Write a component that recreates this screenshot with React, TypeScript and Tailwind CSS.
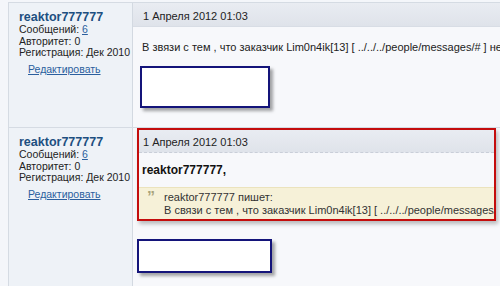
import React from 'react';

const font = { fontFamily: '"Liberation Sans", Arial, sans-serif' };

const UserInfo = () => (
  <div className="w-[124px] shrink-0 bg-[#eef2f7] border-r border-[#d3d9e1] pl-[10px] pt-[7px] whitespace-nowrap">
    <div className="text-[12.5px] font-bold leading-[14px] text-[#1d4f80]">reaktor777777</div>
    <div className="text-[10.5px] leading-[11.5px] text-[#222]">
      Сообщений: <span className="text-[#2b5f9e] underline">6</span>
    </div>
    <div className="text-[10.5px] leading-[11.5px] text-[#222]">Авторитет: 0</div>
    <div className="text-[10.5px] leading-[11.5px] text-[#222]">Регистрация: Дек 2010</div>
    <div className="mt-[4px] pl-[9px] text-[10.5px] leading-[12px] text-[#2b5f9e] underline">Редактировать</div>
  </div>
);

export default function App() {
  return (
    <div className="w-[500px] h-[286px] overflow-hidden bg-[#f4f6fa] pl-[8px] pt-[2px]" style={font}>
      {/* post 1 */}
      <div className="flex h-[125px] border-t border-l border-[#d5dbe3]">
        <UserInfo />
        <div className="flex-1 min-w-0 overflow-hidden bg-[#f7f8fb]">
          <div className="h-[24px] bg-gradient-to-b from-[#e9ecf2] to-[#dfe3ea] border-b border-[#d8dde5] pl-[10px] pt-[7px] text-[11px] leading-[12px] text-[#222] whitespace-nowrap">
            1 Апреля 2012 01:03
          </div>
          <div className="pl-[9px] pt-[14px] text-[11px] leading-[12px] text-[#222] whitespace-nowrap">
            В звязи с тем , что заказчик Lim0n4ik[13] [ ../../../people/messages/# ] не
          </div>
          <div className="pl-[7px] pt-[13px]">
            <div className="w-[130px] h-[42px] bg-white border-2 border-[#14147a] shadow-[3px_3px_3px_rgba(0,0,0,0.35)]" />
          </div>
        </div>
      </div>
      {/* post 2 */}
      <div className="flex h-[160px] border-t border-l border-[#d5dbe3]">
        <UserInfo />
        <div className="flex-1 min-w-0 overflow-hidden bg-[#f7f8fb] pl-[4px]">
          <div className="w-[359px] border-2 border-[#c40d0d] shadow-[2px_3px_4px_rgba(0,0,0,0.25)]">
            <div className="h-[23px] bg-gradient-to-b from-[#e9ecf2] to-[#dfe3ea] border-b border-dashed border-[#c9ced8] pl-[4px] pt-[6px] text-[11px] leading-[12px] text-[#222] whitespace-nowrap">
              1 Апреля 2012 01:03
            </div>
            <div className="bg-[#f7f8fb] pl-[3px] pt-[11px] pb-[10px] text-[12px] font-bold leading-[13px] text-[#111]">
              reaktor777777,
            </div>
            <div className="flex bg-[#f6f1d8] border-t border-[#ebe3bd] pt-[3px] pb-[2px] text-[11px] leading-[13px] text-[#333] whitespace-nowrap overflow-hidden">
              <div className="w-[25px] shrink-0 pl-[8px] text-[16px] leading-[14px] font-bold text-[#a9a47c]">”</div>
              <div>
                <div>reaktor777777 пишет:</div>
                <div>В связи с тем , что заказчик Lim0n4ik[13] [ ../../../people/messages/#</div>
              </div>
            </div>
          </div>
          <div className="pt-[18px]">
            <div className="w-[135px] h-[34px] bg-white border-2 border-[#14147a] shadow-[3px_3px_3px_rgba(0,0,0,0.35)]" />
          </div>
        </div>
      </div>
    </div>
  );
}
